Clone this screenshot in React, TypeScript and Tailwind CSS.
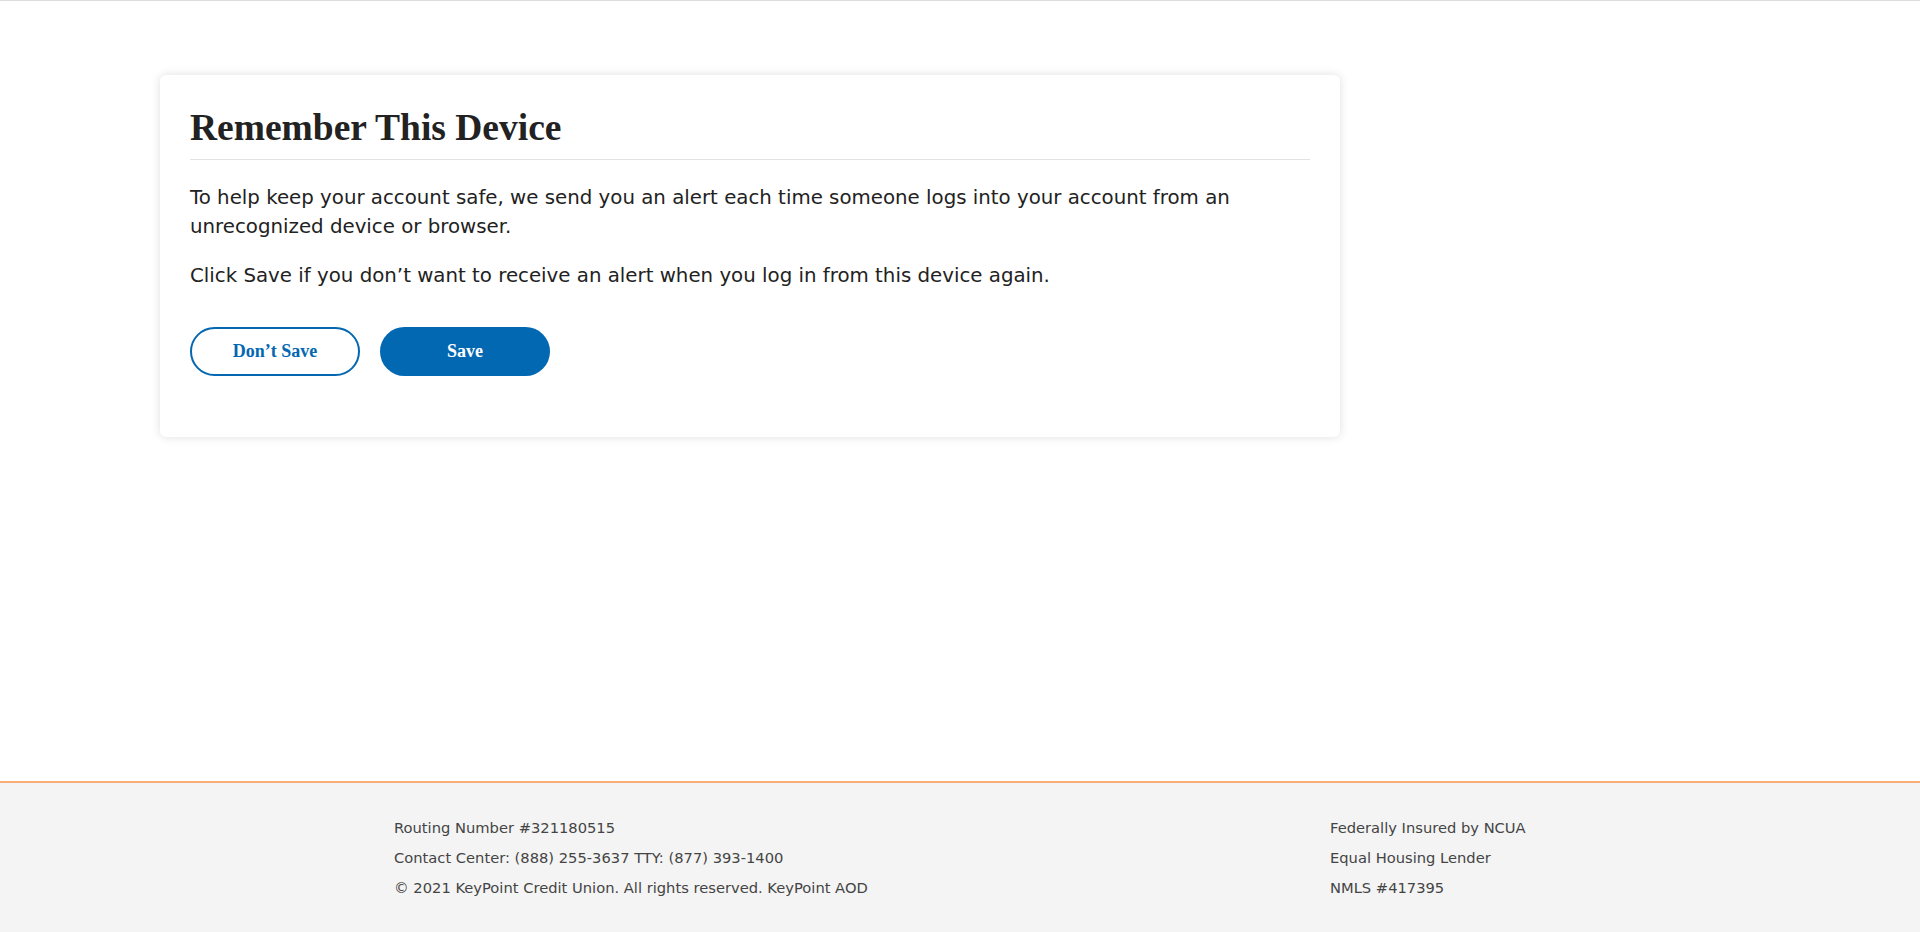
export default function App() {
  const leftLines = [
    "Routing Number #321180515",
    "Contact Center: (888) 255-3637 TTY: (877) 393-1400",
    "© 2021 KeyPoint Credit Union. All rights reserved. KeyPoint AOD",
  ];
  const rightLines = ["Federally Insured by NCUA", "Equal Housing Lender", "NMLS #417395"];

  return (
    <div className="min-h-screen flex flex-col bg-white border-t border-[#dddddd] font-['DejaVu_Sans',sans-serif]">
      {/* Main */}
      <main className="flex-1 pl-[160px] pt-[74px]">
        <div className="w-[1180px] bg-white rounded-[6px] shadow-[0_0_10px_rgba(0,0,0,0.13)] px-[30px] pt-[31px] pb-[61px]">
          <h1 className="font-['Liberation_Serif',serif] font-bold text-[37.5px] leading-[44px] text-[#222222] pb-[9px] border-b border-[#e2e2e2]">
            Remember This Device
          </h1>
          <p className="mt-[23px] text-[19.8px] leading-[29px] text-[#222222]">
            To help keep your account safe, we send you an alert each time someone logs into your account from an
            unrecognized device or browser.
          </p>
          <p className="mt-[20px] text-[19.8px] leading-[29px] text-[#222222]">
            Click Save if you don’t want to receive an alert when you log in from this device again.
          </p>
          <div className="mt-[37px] flex gap-[20px]">
            <button className="w-[170px] h-[49px] rounded-full border-2 border-[#0367b1] bg-white text-[#0367b1] font-['Liberation_Serif',serif] font-bold text-[18px]">
              Don’t Save
            </button>
            <button className="w-[170px] h-[49px] rounded-full bg-[#0368b2] text-white font-['Liberation_Serif',serif] font-bold text-[18px]">
              Save
            </button>
          </div>
        </div>
      </main>

      {/* Footer */}
      <footer className="h-[151px] border-t-2 border-[#fbad76] bg-[#f4f4f4] pt-[30px]">
        <div className="ml-[394px] grid grid-cols-[936px_1fr] text-[14.7px] leading-[30px] text-[#444444]">
          <div>
            {leftLines.map((l) => (
              <div key={l}>{l}</div>
            ))}
          </div>
          <div>
            {rightLines.map((l) => (
              <div key={l}>{l}</div>
            ))}
          </div>
        </div>
      </footer>
    </div>
  );
}
